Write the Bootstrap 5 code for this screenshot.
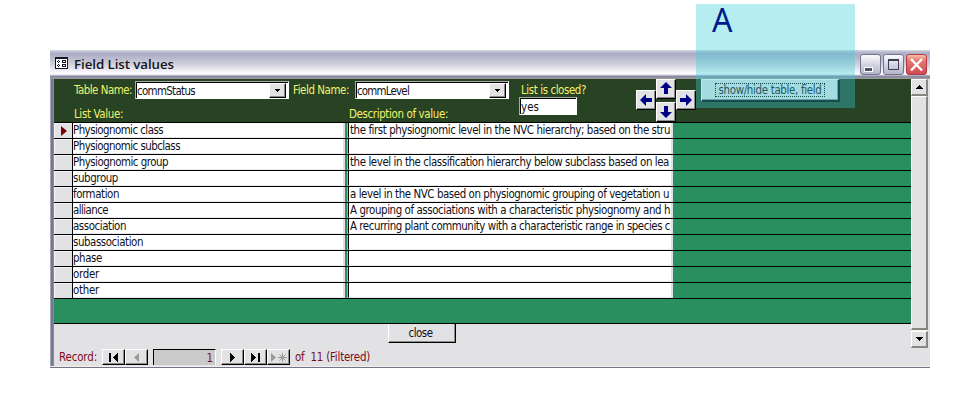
<!DOCTYPE html>
<html lang="en">
<head>
<meta charset="utf-8">
<title>Field List values</title>
<link rel="stylesheet" href="https://cdn.jsdelivr.net/npm/bootstrap@5.3.0/dist/css/bootstrap.min.css">
<style>
body{width:980px;height:418px;overflow:hidden;background:#fff;font:11.4px/15px "DejaVu Sans Condensed","Noto Sans",sans-serif;color:#101018}
.win{width:880px;height:318px;margin:50px 0 0 50px;background:#e2e2e4;border-left:1px solid #a5a5bd;position:relative}
.tbar{height:29px;margin-left:-1px;padding:0 3px 2px 5px;background:linear-gradient(#dcdce6 0,#b9b9cd 2px,#acacc6 4px,#c0c0d2 10px,#d8d8e2 16px,#f6f6fa 22px,#fff 24px,#d0d0dc 25px,#9a9ab2 26px,#76768f 27px,#a8a8b0 28px,#8c8c86 29px)}
.ico{margin-top:7px}
.ttl{font:600 13.300px/28px "Open Sans","Noto Sans",sans-serif;color:#14141c;margin-left:6px}
.client{height:287px;border-left:2px solid #77778f;box-shadow:inset 1px 0 #8c8c84}
.inner{margin-left:1px;width:857px}
.scroll{width:17px;height:269px;background:#f4f3ec}
.sb{background:#e2e2e4;border:1px solid #fff;border-right:2px solid #87877f;border-bottom:2px solid #87877f;width:17px}
.sb-end{height:17px}.sb-thumb{height:234px}
.hd{height:43px;background:#284224;color:#f2f26e}
.left{width:465px;padding-left:20px}
.combo{height:18px;background:#fff;border:1px solid #aaa;border-right-color:#fff;border-bottom-color:#fff;box-shadow:inset 1px 1px #000;color:#101018;padding:1px 2px 1px 1px;line-height:16px}
.drop{width:17px;height:15px}
.bev{background:#e2e2e4;border:1px solid #fff;border-right:1px solid #000;border-bottom:1px solid #000;box-shadow:inset -1px -1px #8c8c8c;color:#101018;display:flex;align-items:center;justify-content:center}
.rows{border-top:1px solid #000}
.rw{height:16px;border-bottom:1px solid #000;background:#298f5f}
.sel{width:19px;background:#e2e2e4;border-right:1px solid #000;box-shadow:inset 1px 1px #f4f4f4}
.c1{width:272px;background:#fff;border-right:2px solid #e0e0e4;border-bottom:1px solid #e8e8ec}
.c2{width:325px;margin-left:3px;background:#fff;border-left:1px solid #000;border-right:2px solid #e0e0e4;border-bottom:1px solid #e8e8ec;box-shadow:-1px 0 #8fbaa5}
.c1,.c2{white-space:nowrap}
.c2{padding-left:1px}
.gr{height:25px;background:#298f5f;border-bottom:1px solid #000}
.ft{color:#7b0a1c}
.num{width:63px;height:16px;background:#cacaca;border:1px solid #000;border-right-color:#fff;border-bottom:0;text-align:right;padding-right:2px;line-height:17px}
.arr{width:20px;height:20px}
.veil{position:absolute;left:696px;top:4px;width:159px;height:104px;background:rgba(58,206,217,.37)}
.veil span{display:block;font:32px/31px "Noto Sans",sans-serif;color:#001c8c;padding-left:16px}
.sys{width:21px;height:21px;margin-left:2px}
.t{display:inline-block;white-space:nowrap}
svg{display:block}
.r1{height:28px}.lab{margin-top:4px}
.cb1{width:154px;margin:2px 0 0 3px}.cb2{width:154px;margin:2px 0 0 6px}
.lv{width:275px}
.closed{width:58px;padding-top:4px;white-space:nowrap}.closed>.t{margin-left:2px;display:block;height:14px}
.arrows{margin-left:59px}.side{margin-top:11px}.dn{margin-top:3px}
.show{width:139px;height:23px;margin-left:5px;border-right-width:2px;border-bottom-width:2px}
.dots{outline:1px dotted #000;width:108px;height:12px;line-height:13px;text-align:center}
.cls{width:68px;height:20px;margin-left:335px;margin-top:-25px}
.cls .t{margin-right:3px}
.nav2{margin-top:6px;height:16px}
.rec{margin-left:6px;width:43px;line-height:17px}
.nb{width:23px;height:16px}.num{margin:0 5px 0 5px}
.of{margin-left:5px;line-height:17px}
.foot2{height:2px;border-top:1px solid #f4f2e4;border-bottom:1px solid #72728c;margin-left:-1px}
</style>
<script src="https://cdn.jsdelivr.net/npm/bootstrap@5.3.0/dist/js/bootstrap.bundle.min.js"></script>
</head>
<body>
<svg width="0" height="0" class="position-absolute"><defs>
<linearGradient id="g1" x2="0" y2="1"><stop stop-color="#fdfdff"/><stop offset=".55" stop-color="#d2d2e0"/><stop offset="1" stop-color="#b4b4ca"/></linearGradient>
<linearGradient id="g2" x2="0" y2="1"><stop stop-color="#f8c8a8"/><stop offset=".3" stop-color="#e87872"/><stop offset="1" stop-color="#cc4a52"/></linearGradient>
<path id="ar" d="M9 3l6 6h-4v6H7V9H3z" fill="#000084"/>
</defs></svg>
<main class="win">
<header class="tbar d-flex align-items-start">
<svg width="13" height="12" class="ico" shape-rendering="crispEdges"><path fill="#15151f" d="M0 0h13v12H0z"/><path fill="#fff" d="M1 2h11v9H1z"/><path fill="#15151f" d="M2 4h1v1H2zM4 4h1v1H4zM3 3h1v1H3zM3 5h1v1H3zM2 8h1v1H2zM4 8h1v1H4zM3 7h1v1H3zM3 9h1v1H3z"/><path fill="none" stroke="#15151f" d="M7.500 3.500h3v2h-3zM7.500 7.500h3v2h-3z"/></svg>
<div class="flex-grow-1"><span class="t ttl" data-w="100">Field List values</span></div>
<div class="d-flex pt-1">
<svg class="sys" viewBox="0 -1 21 21"><rect x=".5" y="-.5" width="20" height="20" rx="2.500" fill="url(#g1)" stroke="#74748c"/><path fill="#fff" d="M4 12h9v5H4z"/><path fill="#50506c" d="M5 13h7v3H5z"/></svg>
<svg class="sys" viewBox="0 -1 21 21"><rect x=".5" y="-.5" width="20" height="20" rx="2.500" fill="url(#g1)" stroke="#74748c"/><path fill="none" stroke="#3c3c54" d="M5.500 4.500h10v10h-10z"/><path fill="#3c3c54" d="M5 4h11v2H5z"/></svg>
<svg class="sys" viewBox="0 -1 21 21"><rect x=".5" y="-.5" width="20" height="20" rx="2.500" fill="url(#g2)" stroke="#b03a48"/><path stroke="#fff" stroke-width="2.400" d="M5 4l11 11.500M16 4L5 15.500"/></svg>
</div>
</header>
<div class="client">
<div class="d-flex">
<div class="inner">
<section class="hd d-flex">
<div class="left">
<div class="d-flex r1">
<span class="t lab" data-w="58">Table Name:</span>
<div class="combo d-flex justify-content-between cb1"><span class="t" data-w="58">commStatus</span><span class="bev drop"><svg width="5" height="3" shape-rendering="crispEdges"><path d="M0 0h5v1H4v1H3v1H2V2H1V1H0z"/></svg></span></div>
<span class="t lab ms-1" data-w="56">Field Name:</span>
<div class="combo d-flex justify-content-between cb2"><span class="t" data-w="52">commLevel</span><span class="bev drop"><svg width="5" height="3" shape-rendering="crispEdges"><path d="M0 0h5v1H4v1H3v1H2V2H1V1H0z"/></svg></span></div>
</div>
<div class="d-flex"><span class="lv"><span class="t" data-w="49">List Value:</span></span><span class="t" data-w="99">Description of value:</span></div>
</div>
<div class="closed"><span class="t" data-w="65">List is closed?</span><div class="combo"><span class="t" data-w="18">yes</span></div></div>
<div class="d-flex align-items-start arrows">
<span class="bev arr side"><svg width="18" height="18"><use href="#ar" transform="rotate(-90 9 9)"/></svg></span>
<div><span class="bev arr"><svg width="18" height="18"><use href="#ar" y="-1"/></svg></span><span class="bev arr dn"><svg width="18" height="18"><use href="#ar" transform="rotate(180 9 9)"/></svg></span></div>
<span class="bev arr side"><svg width="18" height="18"><use href="#ar" transform="rotate(90 9 9)"/></svg></span>
</div>
<span class="bev show"><span class="dots"><span class="t" data-w="103">show/hide table, field</span></span></span>
</section>
<section id="rows" class="rows"></section>
<div class="gr"></div>
</div>
<div class="scroll d-flex flex-column">
<div class="sb sb-end d-flex align-items-center justify-content-center"><svg width="7" height="4" shape-rendering="crispEdges"><path d="M3 0h1v1h1v1h1v1h1v1H0V3h1V2h1V1h1z"/></svg></div>
<div class="sb sb-thumb"></div>
<div class="sb sb-end d-flex align-items-center justify-content-center mt-auto"><svg width="7" height="4" shape-rendering="crispEdges"><path d="M0 0h7v1H6v1H5v1H4v1H3V3H2V2H1V1H0z"/></svg></div>
</div>
</div>
<footer class="ft">
<span class="bev cls"><span class="t" data-w="24">close</span></span>
<div class="d-flex nav2">
<span class="rec"><span class="t" data-w="38">Record:</span></span>
<span class="bev nb"><svg width="10" height="9" shape-rendering="crispEdges"><path d="M0 0h2v9H0zM9 0v9L4 4.500z"/></svg></span>
<span class="bev nb"><svg width="6" height="9"><path fill="#9a9a9a" d="M5 0v9L0 4.500z"/></svg></span>
<span class="num">1</span>
<span class="bev nb"><svg width="6" height="9" shape-rendering="crispEdges"><path d="M0 0v9l5-4.500z"/></svg></span>
<span class="bev nb"><svg width="10" height="9" shape-rendering="crispEdges"><path d="M0 0v9l5-4.500zM7 0h2v9H7z"/></svg></span>
<span class="bev nb"><svg width="18" height="11"><path fill="#9a9a9a" d="M1 1v9l5-4.500z"/><path stroke="#9a9a9a" d="M12.500 1v9M8 5.500h9M9.500 2.500l6 6M15.500 2.500l-6 6"/></svg></span>
<span class="t of" data-w="75">of&nbsp; 11 (Filtered)</span>
</div>
</footer>
</div>
<div class="foot2"></div>
</main>
<div class="veil"><span>A</span></div>
<script>
const data=[["Physiognomic class","the first physiognomic level in the NVC hierarchy; based on the stru",90,320],["Physiognomic subclass","",107],["Physiognomic group","the level in the classification hierarchy below subclass based on lea",95,319],["subgroup","",45],["formation","a level in the NVC based on physiognomic grouping of vegetation u",46,319],["alliance","A grouping of associations with a characteristic physiognomy and h",35,320],["association","A recurring plant community with a characteristic range in species c",53,320],["subassociation","",70],["phase","",29],["order","",26],["other","",26]];
document.getElementById("rows").innerHTML=data.map((r,i)=>`<div class="rw d-flex"><div class="sel d-flex align-items-center justify-content-center">${i?"":'<svg width="7" height="10"><path fill="#7b0000" d="M1 0v10l6-5z"/></svg>'}</div><div class="c1"><b class="t fw-normal" data-w="${r[2]}">${r[0]}</b></div><div class="c2">${r[1]?`<b class="t fw-normal" data-w="${r[3]}">${r[1]}</b>`:""}</div></div>`).join("");
document.querySelectorAll("[data-w]").forEach(e=>{const s=document.createRange();s.selectNodeContents(e);const w=s.getBoundingClientRect().width;e.style.letterSpacing=(e.dataset.w-w)/e.textContent.length+"px"});
</script>
</body>
</html>
